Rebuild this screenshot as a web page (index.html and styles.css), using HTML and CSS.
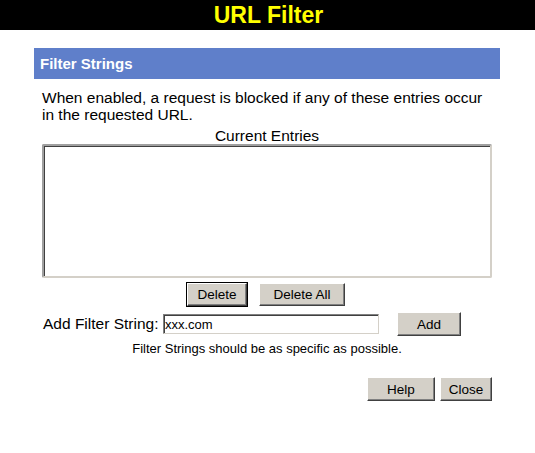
FILE: index.html
```html
<!DOCTYPE html>
<html lang="en">
<head>
    <meta charset="UTF-8">
    <title>URL Filter</title>
    <link rel="stylesheet" href="styles.css">
</head>
<body>
    <div class="page-title">URL Filter</div>

    <div class="panel">
        <div class="section-bar">Filter Strings</div>

        <p class="desc">When enabled, a request is blocked if any of these entries occur in the requested URL.</p>

        <div class="entries-label">Current Entries</div>
        <div class="entries-box">
            <select class="entries" size="8"></select>
        </div>

        <div class="row-buttons">
            <button class="btn btn-default">Delete</button>
            <button class="btn btn-wide">Delete All</button>
        </div>

        <div class="add-row">
            <label for="filterString">Add Filter String:</label>
            <input type="text" id="filterString" value="xxx.com">
            <button class="btn btn-add">Add</button>
        </div>

        <div class="hint">Filter Strings should be as specific as possible.</div>

        <div class="footer-buttons">
            <button class="btn btn-help">Help</button>
            <button class="btn btn-close">Close</button>
        </div>
    </div>
</body>
</html>
```

FILE: styles.css
```css
* {
    box-sizing: border-box;
    margin: 0;
    padding: 0;
}

body {
    font-family: "Liberation Sans", Arial, sans-serif;
    background: #ffffff;
    color: #000000;
    width: 535px;
}

.page-title {
    background: #000000;
    color: #ffff00;
    height: 30px;
    line-height: 30px;
    font-size: 23px;
    font-weight: bold;
    text-align: center;
    padding-left: 2px;
}

.panel {
    width: 466px;
    margin: 18px 0 0 34px;
}

.section-bar {
    background: #5f7fca;
    color: #ffffff;
    height: 31px;
    line-height: 31px;
    padding-left: 6px;
    font-size: 15px;
    font-weight: bold;
}

.desc {
    font-size: 15.5px;
    line-height: 17px;
    padding: 10px 8px 0 8px;
}

.entries-label {
    font-size: 15.5px;
    line-height: 15px;
    text-align: center;
    margin-top: 5px;
}

.entries-box {
    padding: 0 8px;
    margin-top: 1px;
}

.entries {
    display: block;
    width: 450px;
    height: 134px;
    background: #ffffff;
    border: 2px solid;
    border-color: #a0a0a0 #d4d0c8 #d4d0c8 #a0a0a0;
    box-shadow: inset 1px 1px 0 #404040;
    outline: none;
    appearance: none;
}

.btn {
    font-family: "Liberation Sans", Arial, sans-serif;
    font-size: 13.5px;
    color: #000000;
    background: #d4d0c8;
    height: 23px;
    border: 1px solid;
    border-color: #ffffff #404040 #404040 #ffffff;
    box-shadow: inset -1px -1px 0 #808080;
}

.row-buttons {
    display: flex;
    justify-content: center;
    gap: 12px;
    margin-top: 5px;
    padding-right: 2px;
}

.btn-default {
    width: 60px;
    outline: 1px solid #000000;
}

.btn-wide {
    width: 86px;
}

.add-row {
    display: flex;
    align-items: center;
    margin-top: 6px;
    padding-left: 9px;
    font-size: 15.5px;
}

.add-row label {
    width: 120px;
}

.add-row input {
    width: 216px;
    height: 20px;
    font-family: "Liberation Sans", Arial, sans-serif;
    font-size: 13px;
    padding: 0 1px;
    border: 1px solid;
    border-color: #808080 #d4d0c8 #d4d0c8 #808080;
    box-shadow: inset 1px 1px 0 #404040;
    outline: none;
}

.btn-add {
    width: 64px;
    height: 24px;
    margin-left: 18px;
}

.hint {
    font-size: 13px;
    text-align: center;
    margin-top: 5px;
}

.footer-buttons {
    display: flex;
    justify-content: flex-end;
    gap: 5px;
    margin-top: 21px;
    padding-right: 8px;
}

.btn-help {
    width: 68px;
    height: 24px;
}

.btn-close {
    width: 52px;
    height: 24px;
}
```
